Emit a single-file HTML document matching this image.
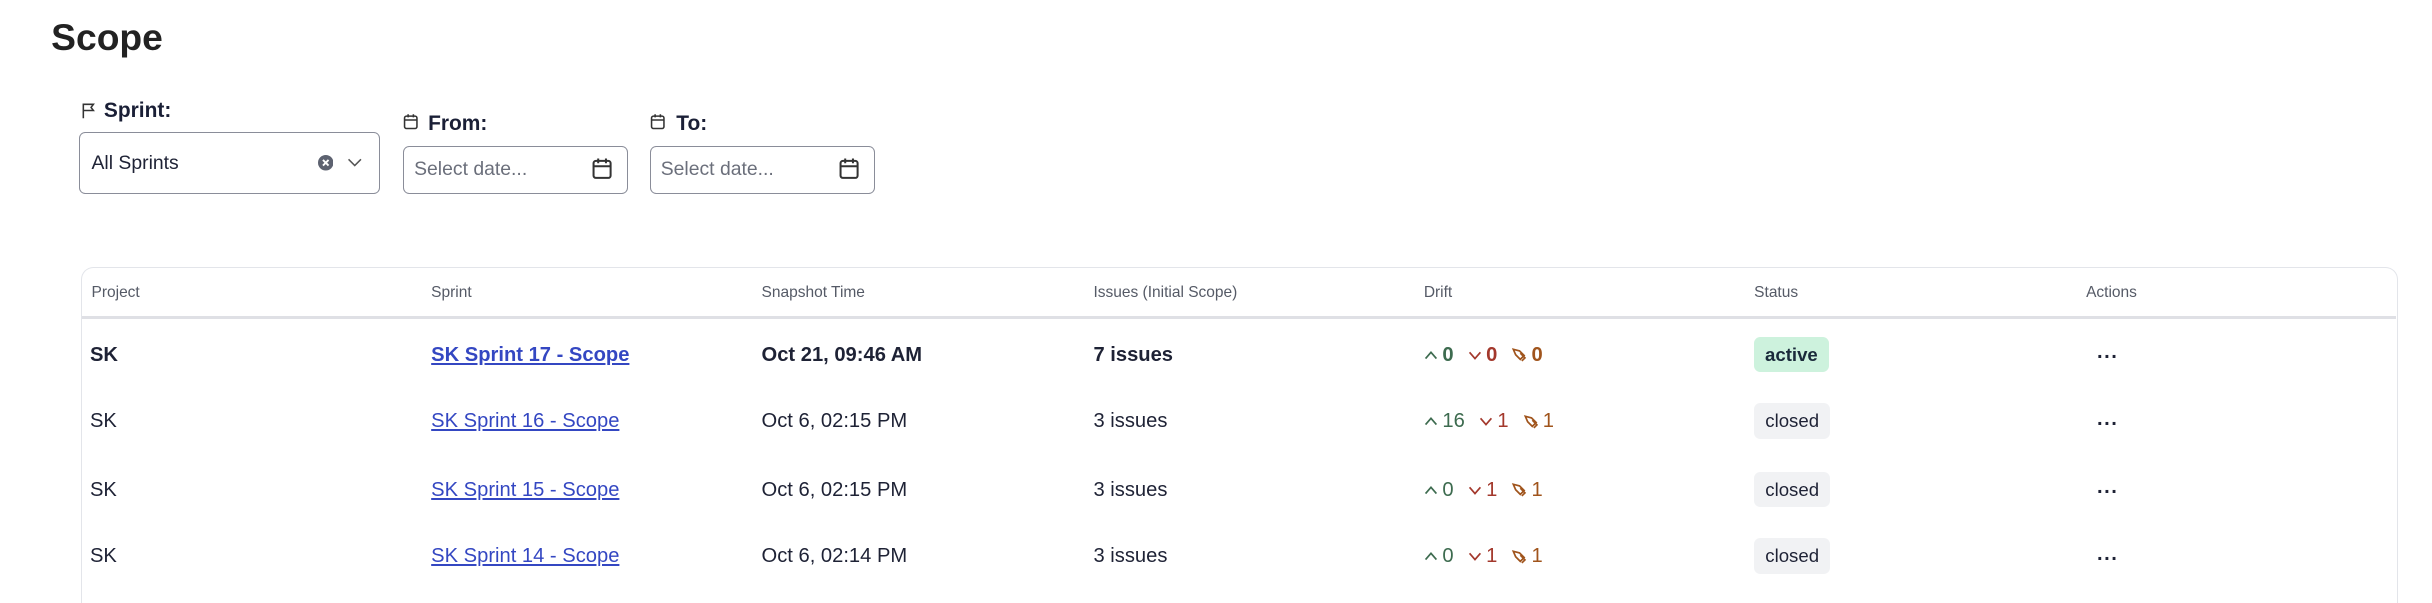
<!DOCTYPE html>
<html><head><meta charset="utf-8"><style>
html,body{margin:0;padding:0;background:#fff;width:2432px;height:603px;overflow:hidden;}
#w{width:1568px;height:389px;zoom:1.551;overflow:hidden;position:relative;font-family:"Liberation Sans",sans-serif;color:#1e2235;}
.a{position:absolute;}
h1{position:absolute;left:33px;top:10px;margin:0;font-size:24px;font-weight:bold;color:#222;}
.lbl{font-size:13.5px;font-weight:bold;color:#1a1f36;}
.box{position:absolute;border:1px solid #8a8d99;border-radius:4px;box-sizing:border-box;background:#fff;}
.ph{font-size:12.5px;color:#6b6f7b;}
.card{position:absolute;left:52px;top:172px;width:1494px;height:217px;border:1px solid #e3e5ea;border-bottom:none;border-radius:8px 8px 0 0;box-sizing:border-box;}
.hd{position:absolute;top:183px;font-size:10px;color:#555a66;}
.hl{position:absolute;left:53px;top:204px;width:1492px;height:2px;background:#dfe0e5;}
.c{position:absolute;font-size:13px;line-height:16px;}
.b{font-weight:bold;}
.lk{color:#3447c2;text-decoration:underline;}
.g{color:#3d6b4f}.r{color:#a3382c}.o{color:#a0541c}
.badge{position:absolute;left:1131px;height:23px;border-radius:4px;font-size:12px;line-height:23px;text-align:center;}
.dr{position:absolute;left:918px;font-size:13px;line-height:16px;display:flex;align-items:center;}
.dr svg{margin-right:3px}
.dots{position:absolute;left:1352px;font-size:13px;letter-spacing:1px;font-weight:bold;}
</style></head><body><div id="w">
<h1>Scope</h1>

<svg class="a" style="left:52px;top:66px" width="10" height="11" viewBox="0 0 10 11"><path d="M1.5 10.5V1.5H8L6.5 3.5 8 5.5H1.5" fill="none" stroke="#333" stroke-width="1"/></svg>
<div class="a lbl" style="left:67px;top:64px">Sprint:</div>
<div class="box" style="left:51px;top:85px;width:194px;height:40px"></div>
<div class="a" style="left:59px;top:98px;font-size:12.5px;color:#1e2235">All Sprints</div>
<svg class="a" style="left:205px;top:100px" width="10" height="10" viewBox="0 0 10 10"><circle cx="5" cy="5" r="5" fill="#5d6270"/><path d="M3.2 3.2l3.6 3.6M6.8 3.2l-3.6 3.6" stroke="#fff" stroke-width="1.2"/></svg>
<svg class="a" style="left:224px;top:101px" width="10" height="7" viewBox="0 0 10 7"><path d="M1 1.5l4 4 4-4" fill="none" stroke="#555" stroke-width="1"/></svg>

<svg class="a" style="left:260px;top:73px" width="10" height="11" viewBox="0 0 10 11"><rect x="1" y="2" width="8" height="8" rx="1.2" fill="none" stroke="#333"/><path d="M1 4.5h8M3.3 0.8v2M6.7 0.8v2" stroke="#333"/></svg>
<div class="a lbl" style="left:276px;top:72px">From:</div>
<div class="box" style="left:260px;top:94px;width:145px;height:31px"></div>
<div class="a ph" style="left:267px;top:102px">Select date...</div>
<svg class="a" style="left:382px;top:101px" width="13" height="15" viewBox="0 0 13 15"><rect x="1" y="2.5" width="11" height="11" rx="1.5" fill="none" stroke="#333" stroke-width="1.3"/><path d="M1 6h11M4 1v3M9 1v3" stroke="#333" stroke-width="1.3"/></svg>

<svg class="a" style="left:419px;top:73px" width="10" height="11" viewBox="0 0 10 11"><rect x="1" y="2" width="8" height="8" rx="1.2" fill="none" stroke="#333"/><path d="M1 4.5h8M3.3 0.8v2M6.7 0.8v2" stroke="#333"/></svg>
<div class="a lbl" style="left:436px;top:72px">To:</div>
<div class="box" style="left:419px;top:94px;width:145px;height:31px"></div>
<div class="a ph" style="left:426px;top:102px">Select date...</div>
<svg class="a" style="left:541px;top:101px" width="13" height="15" viewBox="0 0 13 15"><rect x="1" y="2.5" width="11" height="11" rx="1.5" fill="none" stroke="#333" stroke-width="1.3"/><path d="M1 6h11M4 1v3M9 1v3" stroke="#333" stroke-width="1.3"/></svg>

<div class="card"></div>
<div class="hd" style="left:59px">Project</div>
<div class="hd" style="left:278px">Sprint</div>
<div class="hd" style="left:491px">Snapshot Time</div>
<div class="hd" style="left:705px">Issues (Initial Scope)</div>
<div class="hd" style="left:918px">Drift</div>
<div class="hd" style="left:1131px">Status</div>
<div class="hd" style="left:1345px">Actions</div>
<div class="hl"></div>

<div class="c b" style="left:58px;top:221px">SK</div>
<div class="c b lk" style="left:278px;top:221px">SK Sprint 17 - Scope</div>
<div class="c b" style="left:491px;top:221px">Oct 21, 09:46 AM</div>
<div class="c b" style="left:705px;top:221px">7 issues</div>
<div class="dr b" style="top:221px">
<svg width="9" height="7" viewBox="0 0 9 7"><path d="M1 5.5l3.5-4 3.5 4" fill="none" stroke="#3d6b4f" stroke-width="1.1"/></svg><span class="g">0</span>
<svg style="margin-left:9px" width="9" height="7" viewBox="0 0 9 7"><path d="M1 1.5l3.5 4 3.5-4" fill="none" stroke="#a3382c" stroke-width="1.1"/></svg><span class="r">0</span>
<svg style="margin-left:9px" width="10" height="10" viewBox="0 0 10 10"><path d="M1.5 1.5l4 1 3 3-2.5 2.5-3-3z M6 4l3 3-2 2" fill="none" stroke="#a0541c" stroke-width="1.1"/></svg><span class="o">0</span></div>
<div class="badge b" style="top:217px;width:48px;background:#cdf2dd;color:#1a2a3a">active</div>
<div class="dots" style="top:220px">...</div>

<div class="c" style="left:58px;top:264px">SK</div>
<div class="c lk" style="left:278px;top:264px">SK Sprint 16 - Scope</div>
<div class="c" style="left:491px;top:264px">Oct 6, 02:15 PM</div>
<div class="c" style="left:705px;top:264px">3 issues</div>
<div class="dr" style="top:264px">
<svg width="9" height="7" viewBox="0 0 9 7"><path d="M1 5.5l3.5-4 3.5 4" fill="none" stroke="#3d6b4f" stroke-width="1.1"/></svg><span class="g">16</span>
<svg style="margin-left:9px" width="9" height="7" viewBox="0 0 9 7"><path d="M1 1.5l3.5 4 3.5-4" fill="none" stroke="#a3382c" stroke-width="1.1"/></svg><span class="r">1</span>
<svg style="margin-left:9px" width="10" height="10" viewBox="0 0 10 10"><path d="M1.5 1.5l4 1 3 3-2.5 2.5-3-3z M6 4l3 3-2 2" fill="none" stroke="#a0541c" stroke-width="1.1"/></svg><span class="o">1</span></div>
<div class="badge" style="top:260px;width:49px;background:#f1f2f4">closed</div>
<div class="dots" style="top:263px">...</div>

<div class="c" style="left:58px;top:308px">SK</div>
<div class="c lk" style="left:278px;top:308px">SK Sprint 15 - Scope</div>
<div class="c" style="left:491px;top:308px">Oct 6, 02:15 PM</div>
<div class="c" style="left:705px;top:308px">3 issues</div>
<div class="dr" style="top:308px">
<svg width="9" height="7" viewBox="0 0 9 7"><path d="M1 5.5l3.5-4 3.5 4" fill="none" stroke="#3d6b4f" stroke-width="1.1"/></svg><span class="g">0</span>
<svg style="margin-left:9px" width="9" height="7" viewBox="0 0 9 7"><path d="M1 1.5l3.5 4 3.5-4" fill="none" stroke="#a3382c" stroke-width="1.1"/></svg><span class="r">1</span>
<svg style="margin-left:9px" width="10" height="10" viewBox="0 0 10 10"><path d="M1.5 1.5l4 1 3 3-2.5 2.5-3-3z M6 4l3 3-2 2" fill="none" stroke="#a0541c" stroke-width="1.1"/></svg><span class="o">1</span></div>
<div class="badge" style="top:304px;width:49px;background:#f1f2f4">closed</div>
<div class="dots" style="top:307px">...</div>

<div class="c" style="left:58px;top:351px">SK</div>
<div class="c lk" style="left:278px;top:351px">SK Sprint 14 - Scope</div>
<div class="c" style="left:491px;top:351px">Oct 6, 02:14 PM</div>
<div class="c" style="left:705px;top:351px">3 issues</div>
<div class="dr" style="top:351px">
<svg width="9" height="7" viewBox="0 0 9 7"><path d="M1 5.5l3.5-4 3.5 4" fill="none" stroke="#3d6b4f" stroke-width="1.1"/></svg><span class="g">0</span>
<svg style="margin-left:9px" width="9" height="7" viewBox="0 0 9 7"><path d="M1 1.5l3.5 4 3.5-4" fill="none" stroke="#a3382c" stroke-width="1.1"/></svg><span class="r">1</span>
<svg style="margin-left:9px" width="10" height="10" viewBox="0 0 10 10"><path d="M1.5 1.5l4 1 3 3-2.5 2.5-3-3z M6 4l3 3-2 2" fill="none" stroke="#a0541c" stroke-width="1.1"/></svg><span class="o">1</span></div>
<div class="badge" style="top:347px;width:49px;background:#f1f2f4">closed</div>
<div class="dots" style="top:350px">...</div>
</div></body></html>
